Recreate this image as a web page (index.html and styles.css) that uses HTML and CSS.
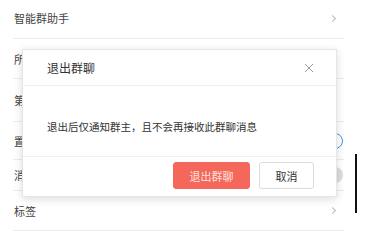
FILE: index.html
```html
<!DOCTYPE html>
<html lang="zh">
<head>
<meta charset="utf-8">
<link rel="stylesheet" href="styles.css">
</head>
<body>
<div class="page">
  <ul class="list">
    <li class="row r1"><span class="label">智能群助手</span><span class="chev"></span></li>
    <li class="row r2"><span class="label">所有群成员</span><span class="chev"></span></li>
    <li class="row r3"><span class="label">第三方应用</span><span class="chev"></span></li>
    <li class="row r4"><span class="label">置顶聊天</span><span class="toggle on"></span></li>
    <li class="row r5"><span class="label">消息免打扰</span><span class="toggle"></span></li>
    <li class="row r6"><span class="label">标签</span><span class="chev"></span></li>
  </ul>
  <div class="cursor"></div>
  <div class="dialog">
    <div class="dlg-head">
      <span class="dlg-title">退出群聊</span>
      <svg class="close" width="10" height="10" viewBox="0 0 10 10"><path d="M1 1L9 9M9 1L1 9" stroke="#9a9a9a" stroke-width="1" fill="none"/></svg>
    </div>
    <div class="dlg-body">退出后仅通知群主，且不会再接收此群聊消息</div>
    <div class="dlg-foot">
      <button class="btn danger">退出群聊</button>
      <button class="btn">取消</button>
    </div>
  </div>
</div>
</body>
</html>
```
FILE: styles.css
```css
* { box-sizing: border-box; }
html, body { margin: 0; padding: 0; background: #fff; }
body { font-family: "Noto Sans CJK SC", "Noto Sans", sans-serif; color: #333; }
.page { position: relative; width: 371px; height: 236px; overflow: hidden; }
.list { list-style: none; margin: 0; padding: 0 0 0 13px; width: 344px; }
.row { display: flex; align-items: center; justify-content: space-between; border-bottom: 1px solid #ececec; padding: 0 5px 0 1px; font-size: 11px; color: #444; }
.r1 { height: 39px; padding-bottom: 2px; }
.r2 { height: 40px; }
.r3 { height: 43px; }
.r4 { height: 38px; }
.r5 { height: 31px; }
.r6 { height: 40px; }
.chev { width: 5px; height: 5px; border-top: 1px solid #bbb; border-right: 1px solid #bbb; transform: rotate(45deg); margin-right: 4px; }
.toggle { width: 30px; height: 16px; border-radius: 8px; background: #ddd; position: relative; margin-right: -4px; }
.toggle.on { background: #fff; border: 1px solid #4a90e2; }
.cursor { position: absolute; left: 355px; top: 154px; width: 2px; height: 59px; background: #111; }
.dialog { position: absolute; left: 22px; top: 49px; width: 315px; height: 148px; background: #fff; border: 1px solid #e6e6e6; box-shadow: 0 2px 8px rgba(0,0,0,0.14); display: flex; flex-direction: column; }
.dlg-head { height: 36px; display: flex; align-items: center; justify-content: space-between; padding: 0 22px 0 24px; border-bottom: 1px solid #f0f0f0; }
.dlg-title { font-size: 12px; color: #333; }
.close { display: block; }
.dlg-body { flex: 1; font-size: 10.5px; color: #333; padding: 33px 0 0 24px; }
.dlg-foot { height: 40px; border-top: 1px solid #f0f0f0; display: flex; justify-content: flex-end; align-items: center; gap: 9px; padding: 0 22px 2px 0; }
.btn { height: 27px; font-family: inherit; font-size: 11px; border-radius: 3px; background: #fff; border: 1px solid #dcdcdc; color: #333; width: 55px; padding: 0; }
.btn.danger { width: 77px; background: #f4675a; border-color: #f4675a; color: #fde3df; }
```
